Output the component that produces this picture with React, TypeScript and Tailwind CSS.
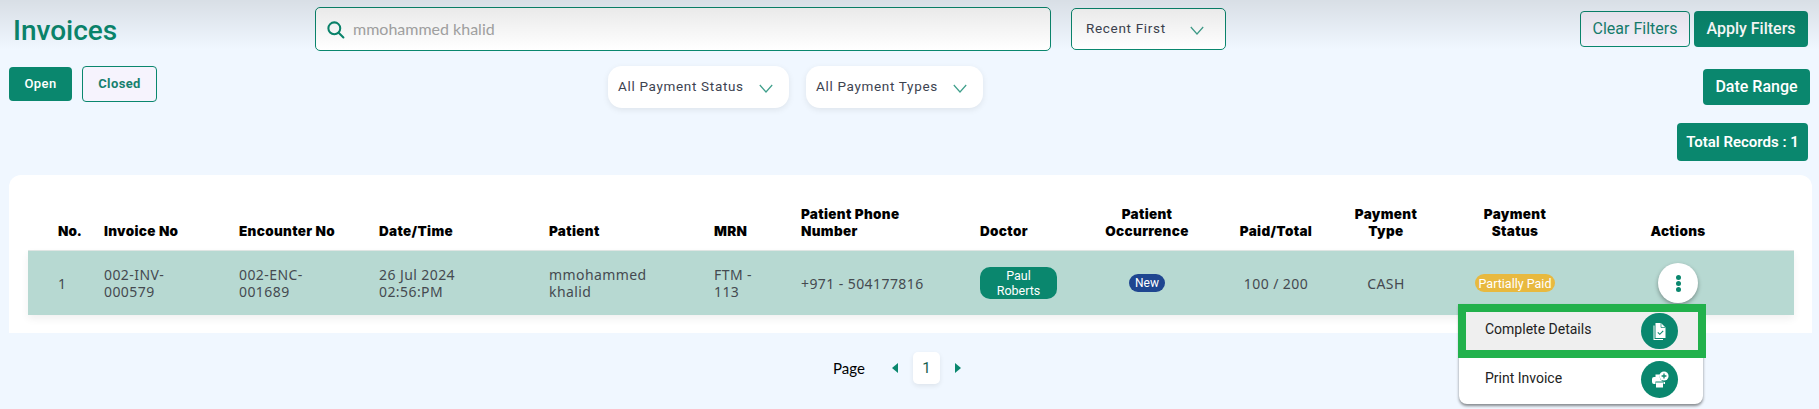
const headerFont = "font-['Inter','Liberation_Sans',sans-serif]";

const columns =
	"grid grid-cols-[76px_135px_140px_170px_165px_87px_179px_115px_104px_154px_66px_192px_134px_49px]";

function Chevron({ className = "" }: { className?: string }) {
	return (
		<svg viewBox="0 0 14 9" className={`h-[9px] w-[14px] ${className}`} fill="none" stroke="#3f9f8b" strokeWidth="1.2">
			<path d="M0.8 1 7 8 13.2 1" />
		</svg>
	);
}

function Select({ label, className, chevronGap }: { label: string; className: string; chevronGap: string }) {
	return (
		<div className={`flex items-center ${className}`}>
			<span className="text-[13.5px] leading-none tracking-[0.05em] text-[#3d4350]">{label}</span>
			<Chevron className={`${chevronGap} mt-[2px]`} />
		</div>
	);
}

function GreenButton({ children, className = "" }: { children: React.ReactNode; className?: string }) {
	return (
		<button className={`flex items-center justify-center rounded-[4px] bg-[#0a876e] font-medium text-white ${className}`}>
			{children}
		</button>
	);
}

function HeaderCell({ children, center }: { children: React.ReactNode; center?: boolean }) {
	return (
		<div className={`self-end text-[13.5px] font-black leading-[17px] tracking-[0.025em] text-black ${center ? "text-center" : ""}`}>
			{children}
		</div>
	);
}

export default function App() {
	return (
		<div className="relative min-h-screen overflow-hidden bg-[#f0f7ff] font-['Roboto',sans-serif]">
			{/* top shadow that sits over the header */}
			<div className="pointer-events-none absolute inset-x-0 top-0 z-10 h-[50px] bg-gradient-to-b from-black/10 to-transparent" />

			{/* first row */}
			<div className="flex items-start pt-[7px]">
				<div className="w-[315px] pl-[13px] pt-[7px] text-[28px] font-medium leading-[34px] text-[#0a876e]">Invoices</div>
				<div className="flex h-[44px] w-[736px] items-center rounded-[5px] border border-[#0a876e] bg-white pl-[10px]">
					<svg viewBox="0 0 24 24" className="h-[19px] w-[19px]" fill="none" stroke="#0a876e" strokeWidth="2.6">
						<circle cx="10.5" cy="10.5" r="7.5" />
						<path d="M16 16l6 6" strokeLinecap="round" />
					</svg>
					<span className="ml-[8px] font-['Lato',sans-serif] text-[16px] text-[#a5a5a5]">mmohammed khalid</span>
				</div>
				<Select
					label="Recent First"
					chevronGap="ml-[24px]"
					className="ml-[20px] mt-px h-[42px] w-[155px] rounded-[5px] border border-[#0a876e] bg-white pl-[14px]"
				/>
				<button className="ml-auto mt-[4px] h-[36px] w-[110px] rounded-[4px] border border-[#0a876e] bg-[#f6f3fd] text-[16px] text-[#16806f]">
					Clear Filters
				</button>
				<GreenButton className="ml-[4px] mr-[11px] mt-[4px] h-[36px] w-[114px] text-[16px]">Apply Filters</GreenButton>
			</div>

			{/* second row */}
			<div className="mt-[15px] flex items-start">
				<GreenButton className="ml-[9px] mt-px h-[34px] w-[63px] text-[13px] font-bold tracking-[0.03em]">Open</GreenButton>
				<button className="ml-[10px] h-[36px] w-[75px] rounded-[4px] border border-[#0a876e] bg-[#f6f3fd] text-[13px] font-bold tracking-[0.03em] text-[#16806f]">
					Closed
				</button>
				<Select
					label="All Payment Status"
					chevronGap="ml-[15px]"
					className="ml-[451px] h-[42px] w-[181px] rounded-[14px] bg-white pl-[10px] shadow-[0_2px_6px_rgba(0,0,0,0.08)]"
				/>
				<Select
					label="All Payment Types"
					chevronGap="ml-[15px]"
					className="ml-[17px] h-[42px] w-[177px] rounded-[14px] bg-white pl-[10px] shadow-[0_2px_6px_rgba(0,0,0,0.08)]"
				/>
				<GreenButton className="ml-auto mr-[9px] mt-[3px] h-[36px] w-[107px] text-[16px]">Date Range</GreenButton>
			</div>

			{/* total records */}
			<div className="mt-[15px] flex justify-end pr-[11px]">
				<GreenButton className="h-[38px] w-[131px] text-[15px] font-semibold">Total Records : 1</GreenButton>
			</div>

			{/* table card */}
			<div className="ml-[9px] mr-[7px] mt-[14px] h-[158px] rounded-t-[12px] bg-white pl-[19px] pr-[18px] pt-[31px]">
				<div className={`${columns} ${headerFont} h-[44px] pb-[10px]`}>
					<div className="self-end pl-[30px] text-[13.5px] font-black leading-[17px] text-black">No.</div>
					<HeaderCell>Invoice No</HeaderCell>
					<HeaderCell>Encounter No</HeaderCell>
					<HeaderCell>Date/Time</HeaderCell>
					<HeaderCell>Patient</HeaderCell>
					<HeaderCell>MRN</HeaderCell>
					<HeaderCell>
						Patient Phone
						<br />
						Number
					</HeaderCell>
					<HeaderCell>Doctor</HeaderCell>
					<HeaderCell center>
						Patient
						<br />
						Occurrence
					</HeaderCell>
					<HeaderCell center>Paid/Total</HeaderCell>
					<HeaderCell center>
						Payment
						<br />
						Type
					</HeaderCell>
					<HeaderCell center>
						Payment
						<br />
						Status
					</HeaderCell>
					<HeaderCell center>Actions</HeaderCell>
				</div>

				<div className={`${columns} h-[65px] items-center border-t border-[#dfe5e3] bg-[#b7d9d2] font-['Noto_Sans',sans-serif] text-[14px] leading-[17px] tracking-[0.03em] text-[#454a50] shadow-[0_4px_8px_rgba(0,0,0,0.06)]`}>
					<div className="pl-[30px]">1</div>
					<div>
						002-INV-
						<br />
						000579
					</div>
					<div>
						002-ENC-
						<br />
						001689
					</div>
					<div>
						26 Jul 2024
						<br />
						02:56:PM
					</div>
					<div>
						mmohammed
						<br />
						khalid
					</div>
					<div>
						FTM -
						<br />
						113
					</div>
					<div>+971 - 504177816</div>
					<div className="flex h-[32px] w-[77px] items-center justify-center rounded-[10px] bg-[#0a876e] text-center font-['Roboto',sans-serif] text-[12.5px] leading-[15px] tracking-normal text-white">
						Paul
						<br />
						Roberts
					</div>
					<div className="flex justify-center">
						<span className="flex h-[18px] w-[36px] items-center justify-center rounded-full bg-[#1f4690] font-['Roboto',sans-serif] text-[12px] tracking-normal text-white">
							New
						</span>
					</div>
					<div className="text-center">100 / 200</div>
					<div className="text-center">CASH</div>
					<div className="flex justify-center">
						<span className="flex h-[18px] w-[80px] items-center justify-center rounded-full bg-[#e8b93f] font-['Roboto',sans-serif] text-[12.5px] tracking-normal text-white">
							Partially Paid
						</span>
					</div>
					<div className="flex justify-center">
						<button className="flex h-[40px] w-[40px] flex-col items-center justify-center gap-px rounded-full bg-white shadow-[0_2px_4px_rgba(0,0,0,0.35)]">
							<span className="h-[5px] w-[5px] rounded-full bg-[#0a876e]" />
							<span className="h-[5px] w-[5px] rounded-full bg-[#0a876e]" />
							<span className="h-[5px] w-[5px] rounded-full bg-[#0a876e]" />
						</button>
					</div>
					<div />
				</div>
			</div>

			{/* pagination */}
			<div className="mt-[19px] flex items-center justify-center pr-[25px]">
				<span className="font-['Lato',sans-serif] text-[15px] text-black">Page</span>
				<span className="ml-[27px] h-0 w-0 border-y-[5px] border-r-[6px] border-y-transparent border-r-[#0a876e]" />
				<span className="ml-[15px] flex h-[32px] w-[27px] items-center justify-center rounded-[5px] bg-white text-[15px] text-[#16604f] shadow-[0_2px_5px_rgba(0,0,0,0.08)]">
					1
				</span>
				<span className="ml-[15px] h-0 w-0 border-y-[5px] border-l-[6px] border-y-transparent border-l-[#0a876e]" />
			</div>

			{/* open actions menu */}
			<div className="absolute left-[1459px] top-[304px] z-20 h-[100px] w-[244px] rounded-b-[8px] bg-white shadow-[0_2px_3px_rgba(0,0,0,0.45)]">
				<div className="-ml-px flex h-[54px] w-[248px] items-center justify-between border-[8px] border-[#22b14c] bg-[#efefef] pl-[19px] pr-[20px] text-[14px] text-[#222]">
					<span className="mb-[3px]">Complete Details</span>
					<span className="flex h-[36px] w-[37px] items-center justify-center rounded-full bg-[#0a876e]">
						<svg viewBox="0 0 13 19" className="h-[19px] w-[13px]">
							<path d="M0.5 3.5h1v13.5H10v1H0.5z" fill="white" />
							<path d="M2.5 1H8l4.5 4.5V16H2.5z" fill="white" />
							<path d="M8 1v4.5h4.5" fill="none" stroke="#0a876e" strokeWidth="0.7" />
							<path d="M4.8 10.3l2 2 3.4-3.4" fill="none" stroke="#0a876e" strokeWidth="1.1" />
						</svg>
					</span>
				</div>
				<div className="flex h-[42px] items-center justify-between pl-[26px] pr-[25px] text-[14px] text-[#222]">
					<span className="mb-px">Print Invoice</span>
					<span className="flex h-[37px] w-[37px] items-center justify-center rounded-full bg-[#0a876e]">
						<svg viewBox="0 0 18 17" className="h-[17px] w-[18px]">
							<path d="M1 8a2 2 0 0 1 2-2h1.5V3.5H9a5.5 5.5 0 0 0 4.5 7.5H14v2h-1.5v-2.5h-8V13H3a2 2 0 0 1-2-2z" fill="white" />
							<rect x="5" y="11.5" width="7" height="5" fill="white" />
							<circle cx="13" cy="5" r="4.6" fill="white" />
							<path d="M13 2.6v4.8M10.6 5h4.8" stroke="#0a876e" strokeWidth="1.3" />
						</svg>
					</span>
				</div>
			</div>
		</div>
	);
}
